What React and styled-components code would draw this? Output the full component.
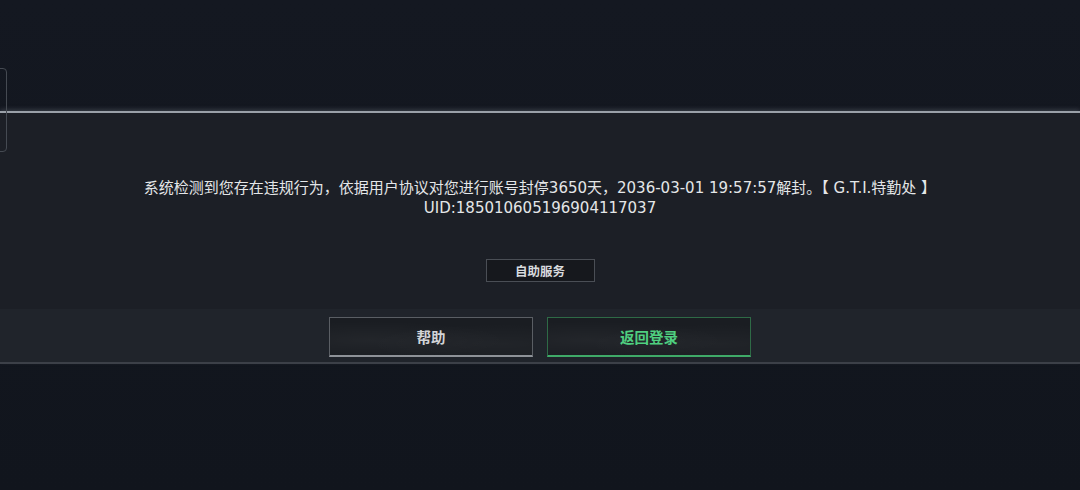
import styled, { createGlobalStyle } from "styled-components";

const GlobalStyle = createGlobalStyle`
  html, body {
    margin: 0;
    padding: 0;
    background: #12161e;
  }
  body {
    font-family: "DejaVu Sans", "Noto Sans CJK SC", sans-serif;
  }
`;

const Screen = styled.div`
  position: relative;
  width: 1080px;
  height: 490px;
  overflow: hidden;
  display: flex;
  flex-direction: column;
  background: linear-gradient(180deg, #141821 0%, #11151d 100%);
`;

const TopArea = styled.div`
  height: 111px;
  flex: none;
`;

const SideTab = styled.div`
  position: absolute;
  left: -6px;
  top: 68px;
  width: 11px;
  height: 82px;
  border: 1px solid #454a52;
  border-radius: 4px;
`;

const Panel = styled.div`
  flex: none;
  display: flex;
  flex-direction: column;
  background: #1c1f26;
  border-top: 2px solid #9aa0a8;
  box-shadow: 0 -2px 4px rgba(140, 148, 160, 0.25);
`;

const Body = styled.div`
  height: 196px;
  display: flex;
  flex-direction: column;
  align-items: center;
  padding-top: 65px;
  box-sizing: border-box;
`;

const Message = styled.p`
  margin: 0;
  font-size: 15px;
  line-height: 20px;
  color: #e4e6e8;
  text-align: center;
`;

const ServiceButton = styled.button`
  margin-top: 41px;
  width: 109px;
  height: 23px;
  padding: 0;
  background: #16181d;
  border: 1px solid #4a4e55;
  color: #d8dadd;
  font-family: "Noto Sans CJK SC", sans-serif;
  font-size: 12.5px;
  font-weight: 700;
`;

const ActionBar = styled.div`
  height: 55px;
  display: flex;
  justify-content: center;
  gap: 14px;
  padding-top: 8px;
  box-sizing: border-box;
  background: #20242b;
  border-bottom: 2px solid #3c4048;
`;

const ActionButton = styled.button`
  width: 204px;
  height: 40px;
  padding: 0;
  background:
    radial-gradient(ellipse at 20% 60%, rgba(255, 255, 255, 0.04), transparent 60%),
    radial-gradient(ellipse at 85% 70%, rgba(255, 255, 255, 0.03), transparent 55%),
    #1a1d22;
  border: 1px solid ${(p) => (p.$primary ? "#2e6a46" : "#5a5e64")};
  border-bottom: 2px solid ${(p) => (p.$primary ? "#3faa68" : "#8e9298")};
  color: ${(p) => (p.$primary ? "#4fcf80" : "#d2d4d7")};
  font-family: "Noto Sans CJK SC", sans-serif;
  font-size: 14.5px;
  font-weight: 700;
`;

export default function App() {
  return (
    <>
      <GlobalStyle />
      <Screen>
        <SideTab />
        <TopArea />
        <Panel>
          <Body>
            <Message>
              系统检测到您存在违规行为，依据用户协议对您进行账号封停3650天，2036-03-01 19:57:57解封。【 G.T.I.特勤处 】
              <br />
              UID:185010605196904117037
            </Message>
            <ServiceButton>自助服务</ServiceButton>
          </Body>
          <ActionBar>
            <ActionButton>帮助</ActionButton>
            <ActionButton $primary>返回登录</ActionButton>
          </ActionBar>
        </Panel>
      </Screen>
    </>
  );
}
